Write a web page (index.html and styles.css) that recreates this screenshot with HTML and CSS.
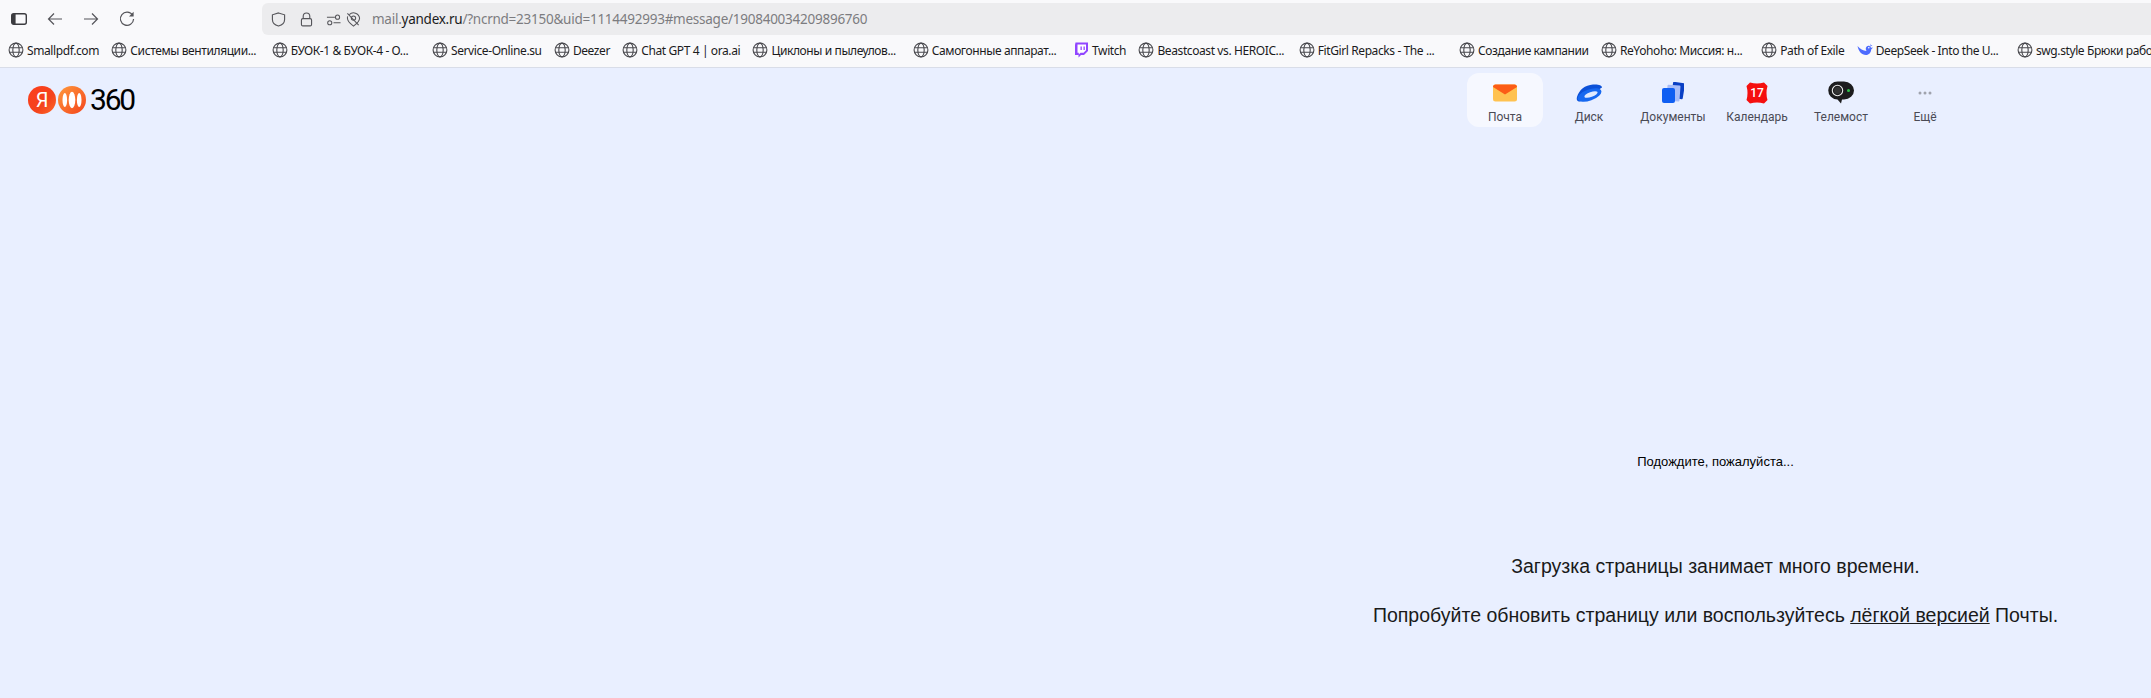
FILE: index.html
```html
<!DOCTYPE html>
<html lang="ru">
<head>
<meta charset="utf-8">
<title>Яндекс Почта</title>
<link rel="stylesheet" href="styles.css">
</head>
<body>
<svg class="defs" width="0" height="0" aria-hidden="true">
  <symbol id="globe" viewBox="0 0 16 16"><g fill="none" stroke="#4a4a4f" stroke-width="1.1"><circle cx="8" cy="8" r="6.9"/><ellipse cx="8" cy="8" rx="3.2" ry="6.9"/><path d="M1.5 5.7h13M1.5 10.3h13"/></g></symbol>
</svg>
<header class="toolbar">
  <div class="nav-buttons">
    <svg class="tb-icon" viewBox="0 0 16 16"><rect x="0.7" y="2.7" width="14.6" height="10.6" rx="2" fill="none" stroke="#3c3c40" stroke-width="1.4"/><rect x="1" y="3" width="3.6" height="10" fill="#3c3c40"/></svg>
    <svg class="tb-icon" viewBox="0 0 16 16"><path d="M15 8H1.500M7 2.500 1.500 8 7 13.500" fill="none" stroke="#55555a" stroke-width="1.200"/></svg>
    <svg class="tb-icon" viewBox="0 0 16 16"><path d="M1 8h13.500M9 2.500 14.500 8 9 13.500" fill="none" stroke="#55555a" stroke-width="1.200"/></svg>
    <svg class="tb-icon" viewBox="0 0 16 16"><path d="M13.600 4.200A6.600 6.600 0 1 0 14.600 8" fill="none" stroke="#55555a" stroke-width="1.200"/><path d="M14.600 0.800v4.600H10z" fill="#55555a"/></svg>
  </div>
  <div class="address">
    <svg class="ad-icon shield" viewBox="0 0 16 16"><path d="M8 1 14.500 3v5c0 3.600-3 6-6.500 7C4.500 14 1.500 11.600 1.500 8V3z" fill="none" stroke="#55555a" stroke-width="1.200"/></svg>
    <svg class="ad-icon lock" viewBox="0 0 16 16"><path d="M4.500 7V4.500a3.500 3.500 0 0 1 7 0V7" fill="none" stroke="#55555a" stroke-width="1.200"/><rect x="2.600" y="7" width="10.800" height="7.800" rx="1.500" fill="none" stroke="#55555a" stroke-width="1.200"/></svg>
    <svg class="ad-icon sliders" viewBox="0 0 16 16"><g fill="none" stroke="#55555a" stroke-width="1.100"><path d="M1 5.500h8.500M8 11.500h7.500"/><circle cx="12.300" cy="5.500" r="2.200"/><circle cx="4" cy="11.500" r="2.200"/></g></svg>
    <svg class="ad-icon geo" viewBox="0 0 16 16"><g fill="none" stroke="#55555a" stroke-width="1.100"><path d="M3.500 2.800A6.500 6.500 0 0 1 14.500 6.500c0 3-3.500 6.500-6.500 8.500C5 13 1.500 9.500 1.500 6.500c0-.700.100-1.300.300-1.900"/><circle cx="8" cy="6.500" r="2.300"/><path d="M1.500 1.500 13.500 14"/></g></svg>
    <div class="url">mail.<span class="domain">yandex.ru</span>/?ncrnd=23150&amp;uid=1114492993#message/190840034209896760</div>
  </div>
</header>
<nav class="bookmarks">
  <a class="bm"><svg class="bm-icon"><use href="#globe"/></svg><span class="bm-text">Smallpdf.com</span></a>
  <a class="bm"><svg class="bm-icon"><use href="#globe"/></svg><span class="bm-text bm-clip">Системы вентиляции...</span></a>
  <a class="bm"><svg class="bm-icon"><use href="#globe"/></svg><span class="bm-text bm-clip">БУОК-1 &amp; БУОК-4 - О...</span></a>
  <a class="bm"><svg class="bm-icon"><use href="#globe"/></svg><span class="bm-text">Service-Online.su</span></a>
  <a class="bm"><svg class="bm-icon"><use href="#globe"/></svg><span class="bm-text">Deezer</span></a>
  <a class="bm"><svg class="bm-icon"><use href="#globe"/></svg><span class="bm-text">Chat GPT 4 | ora.ai</span></a>
  <a class="bm"><svg class="bm-icon"><use href="#globe"/></svg><span class="bm-text bm-clip">Циклоны и пылеулов...</span></a>
  <a class="bm"><svg class="bm-icon"><use href="#globe"/></svg><span class="bm-text bm-clip">Самогонные аппарат...</span></a>
  <a class="bm"><svg class="bm-icon" viewBox="0 0 16 16"><path d="M2.500 0.500H15V9l-4 4H8l-2.500 2.500V13H2V3z" fill="#9146ff"/><path d="M4.500 2.500h8.500v5.700L10.500 10.700H7.500L5.800 12.400V10.700H4.500z" fill="#fff"/><path d="M7.500 4.500h1.300v3.500H7.500zM10.500 4.500h1.300v3.500h-1.300z" fill="#9146ff"/></svg><span class="bm-text">Twitch</span></a>
  <a class="bm"><svg class="bm-icon"><use href="#globe"/></svg><span class="bm-text bm-clip">Beastcoast vs. HEROIC...</span></a>
  <a class="bm"><svg class="bm-icon"><use href="#globe"/></svg><span class="bm-text bm-clip">FitGirl Repacks - The ...</span></a>
  <a class="bm"><svg class="bm-icon"><use href="#globe"/></svg><span class="bm-text">Создание кампании</span></a>
  <a class="bm"><svg class="bm-icon"><use href="#globe"/></svg><span class="bm-text bm-clip">ReYohoho: Миссия: н...</span></a>
  <a class="bm"><svg class="bm-icon"><use href="#globe"/></svg><span class="bm-text">Path of Exile</span></a>
  <a class="bm"><svg class="bm-icon" viewBox="0 0 16 16"><path d="M0.500 4C1.500 9 4.500 13 9 13c3 0 5-2.500 5.200-5.500.800-.500 1.300-1.200 1.500-2.200-.700.500-1.300.500-1.800.200C13 3.500 11 3.300 9.700 4.500 8.500 5.600 8.500 7.500 9.500 9 6 8.500 3 7 .500 4z" fill="#4d6bfe"/><circle cx="11.800" cy="5.800" r=".8" fill="#fff"/><path d="M13.500 1.500l.500 1.500 1.500.500-1.500.500-.500 1.500" fill="#4d6bfe"/></svg><span class="bm-text bm-clip">DeepSeek - Into the U...</span></a>
  <a class="bm"><svg class="bm-icon"><use href="#globe"/></svg><span class="bm-text">swg.style Брюки рабо</span></a>
</nav>
<div class="page">
  <div class="brand">
    <span class="ya-circle">Я</span>
    <svg class="waves" viewBox="0 0 28 28"><defs><linearGradient id="wavegrad" x1="0" y1="0" x2="1" y2="1"><stop offset="0" stop-color="#ff9a3c"/><stop offset="1" stop-color="#f4431c"/></linearGradient></defs><circle cx="14" cy="14" r="14" fill="url(#wavegrad)"/><ellipse cx="14" cy="14" rx="3.300" ry="8.300" fill="#fff"/><ellipse cx="6.800" cy="14" rx="2.300" ry="7" fill="#fff"/><ellipse cx="21.200" cy="14" rx="2.300" ry="7" fill="#fff"/></svg>
    <span class="brand-num">360</span>
  </div>
  <div class="services">
    <a class="svc svc-active">
      <span class="svc-icon"><svg width="24" height="18" viewBox="0 0 24 18"><rect width="24" height="17" y="0.500" rx="2.500" fill="#ffc250"/><path d="M0 2.500A2.500 2.500 0 0 1 2.500 0.500h19A2.500 2.500 0 0 1 24 2.500V3l-12 7.500L0 3z" fill="#fc5c16"/></svg></span>
      <span class="svc-label">Почта</span>
    </a>
    <a class="svc">
      <span class="svc-icon"><svg width="26" height="18" viewBox="0 0 26 18"><path d="M1 13C3 6 9 1 17 0.500c5-.400 9 .500 9 3L4 17.500C1 17.500 .300 15.500 1 13z" fill="#0b50d8"/><ellipse cx="13.500" cy="11" rx="12.500" ry="5.500" transform="rotate(-20 13.500 11)" fill="#1668f0"/><ellipse cx="15" cy="10.500" rx="7" ry="2.500" transform="rotate(-20 15 10.500)" fill="#dfe9ff"/></svg></span>
      <span class="svc-label">Диск</span>
    </a>
    <a class="svc">
      <span class="svc-icon"><svg width="22" height="21" viewBox="0 0 22 21"><rect x="10" y="0.500" width="12" height="16" rx="1" transform="rotate(9 16 8)" fill="#0a3fc4"/><rect x="5" y="3" width="13" height="16" rx="1" transform="rotate(4 11 11)" fill="#a9bdf8"/><rect x="0" y="6" width="13" height="15" rx="2" fill="#0f5ef2"/></svg></span>
      <span class="svc-label">Документы</span>
    </a>
    <a class="svc">
      <span class="svc-icon"><svg width="22" height="22" viewBox="0 0 22 22"><path d="M4 0.500Q11 2.500 18 0.500L21.500 4Q19.500 11 21.500 18L18 21.500Q11 19.500 4 21.500L0.500 18Q2.500 11 0.500 4z" fill="#f50f0f"/></svg><span class="cal-num">17</span></span>
      <span class="svc-label">Календарь</span>
    </a>
    <a class="svc">
      <span class="svc-icon"><svg width="26" height="23" viewBox="0 0 26 23"><path d="M10 0.500h6a10 9 0 0 1 0 18h-2l-1 4-3.500-4A9.500 9 0 0 1 10 0.500z" fill="#1c1c1e"/><circle cx="9.500" cy="9.500" r="5.200" fill="none" stroke="#e8e8e8" stroke-width="1.100"/><circle cx="9.500" cy="9.500" r="3.500" fill="#333"/><circle cx="20.500" cy="9.500" r="1.500" fill="#2fc24a"/></svg></span>
      <span class="svc-label">Телемост</span>
    </a>
    <a class="svc">
      <span class="svc-icon"><svg width="14" height="4" viewBox="0 0 14 4"><circle cx="2" cy="2" r="1.500" fill="#a0a3ad"/><circle cx="7" cy="2" r="1.500" fill="#a0a3ad"/><circle cx="12" cy="2" r="1.500" fill="#a0a3ad"/></svg></span>
      <span class="svc-label">Ещё</span>
    </a>
  </div>
  <main class="loader">
    <p class="wait">Подождите, пожалуйста...</p>
    <p class="slow">Загрузка страницы занимает много времени.</p>
    <p class="slow slow-next">Попробуйте обновить страницу или воспользуйтесь <a class="light-link">лёгкой версией</a> Почты.</p>
  </main>
</div>
</body>
</html>
```
FILE: styles.css
```css
* { box-sizing: border-box; }
html, body { margin: 0; height: 100%; }
body {
  width: 2151px;
  height: 698px;
  overflow: hidden;
  background: #e9efff;
  font-family: "Liberation Sans", Arial, sans-serif;
  color: #1a1a1a;
  display: flex;
  flex-direction: column;
}
.defs { position: absolute; }

.toolbar {
  height: 35px;
  flex: none;
  background: #f9f9fb;
  display: flex;
  padding-top: 3px;
}
.nav-buttons {
  width: 262px;
  flex: none;
  display: flex;
  gap: 20px;
  padding: 8px 0 0 11px;
}
.tb-icon { width: 16px; height: 16px; flex: none; }
.address {
  flex: 1;
  height: 32px;
  background: #ececee;
  border-radius: 6px 0 0 6px;
  display: flex;
  align-items: center;
  padding-left: 9px;
}
.ad-icon { width: 15px; height: 15px; flex: none; }
.lock { margin-left: 13px; }
.sliders { margin-left: 12px; }
.geo { margin-left: 5px; }
.url {
  margin-left: 11px;
  font: 13.5px "Noto Sans", sans-serif;
  letter-spacing: -0.25px;
  color: #7c7c80;
  white-space: nowrap;
}
.domain { color: #1b1b1d; }

.bookmarks {
  height: 33px;
  flex: none;
  background: #f9f9fb;
  border-bottom: 1px solid #d9dde8;
  display: flex;
  align-items: center;
  gap: 12.3px;
  padding: 0 0 2px 8px;
  overflow: hidden;
}
.bm {
  display: flex;
  align-items: center;
  gap: 3px;
  flex: none;
}
.bm-icon { width: 16px; height: 16px; flex: none; }
.bm-text {
  font: 12px "Noto Sans", sans-serif;
  letter-spacing: -0.4px;
  color: #1b1b1d;
  white-space: nowrap;
}
.bm-clip { width: 129px; }

.page { flex: 1; display: flex; flex-wrap: wrap; align-content: flex-start; }
.brand {
  display: flex;
  align-items: center;
  height: 28px;
  margin: 18px 0 0 28px;
}
.ya-circle {
  width: 28px;
  height: 28px;
  border-radius: 50%;
  background: linear-gradient(135deg, #fc3f1d, #f4431c 60%, #ff6a2a);
  color: #fff;
  font: 400 20px/28px Roboto, sans-serif;
  text-align: center;
}
.waves { width: 28px; height: 28px; margin-left: 2px; }
.brand-num {
  margin-left: 4px;
  font: 400 30px/28px Roboto, sans-serif;
  letter-spacing: -2.2px;
  color: #000;
}
.services {
  margin-left: auto;
  margin-top: 5px;
  margin-right: 188px;
  display: flex;
  gap: 8px;
}
.svc {
  width: 76px;
  height: 54px;
  border-radius: 12px;
  display: flex;
  flex-direction: column;
  align-items: center;
}
.svc-active { background: #f6f8ff; }
.svc-icon {
  height: 23px;
  margin-top: 8px;
  display: flex;
  align-items: center;
  justify-content: center;
  position: relative;
}
.svc-label {
  margin-top: 5px;
  font: 12px/16px Roboto, sans-serif;
  color: #4a4a55;
  white-space: nowrap;
}
.cal-num {
  position: absolute;
  inset: 0;
  display: flex;
  align-items: center;
  justify-content: center;
  font: 500 12px Roboto, sans-serif;
  color: #fff;
}
.loader {
  width: 100%;
  padding: 327px 0 0 1280px;
  text-align: center;
  color: #1a1a1a;
}
.loader p { margin: 0; }
.loader .wait { font-size: 13px; line-height: 15px; color: #000; }
.loader .slow { font-size: 19.5px; line-height: 24px; margin-top: 85px; }
.loader .slow-next { margin-top: 25px; }
.light-link { text-decoration: underline; }
```
